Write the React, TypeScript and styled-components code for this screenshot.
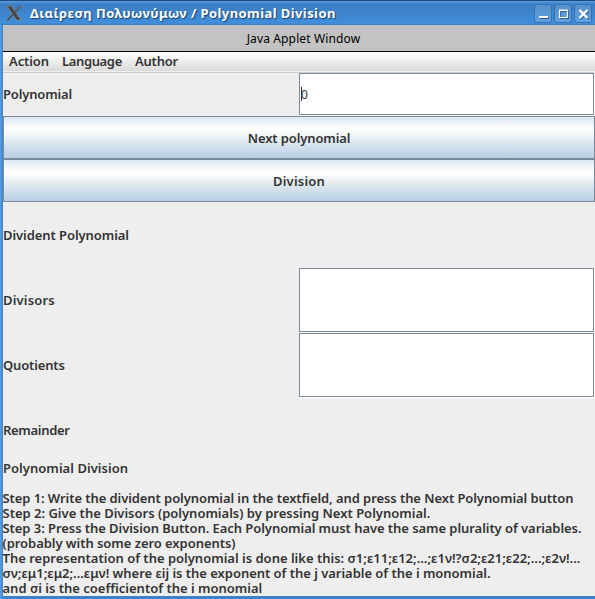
import React from 'react';
import styled, { createGlobalStyle } from 'styled-components';

const GlobalStyle = createGlobalStyle`
  * { box-sizing: border-box; }
  body { margin: 0; overflow: hidden; }
`;

const Window = styled.div`
  width: 595px;
  height: 599px;
  display: flex;
  flex-direction: column;
  background: #eeeeee;
  color: #333333;
  font: 600 13px/15px 'Noto Sans', sans-serif;
  white-space: pre;
`;

const TitleBar = styled.header`
  height: 25px;
  flex: none;
  display: flex;
  align-items: center;
  padding: 0 3px 0 6px;
  border-top: 1px solid #1f4878;
  background: linear-gradient(#5a9ce0 0, #3c80c6 3px, #3b80c6 7px, #428edb 22px, #3a7cc2 24px);
`;

const TitleText = styled.h1`
  flex: 1;
  margin: 0 0 0 8px;
  font: 700 13px/20px 'Noto Sans', sans-serif;
  letter-spacing: 0.42px;
  color: #ffffff;
  text-shadow: 1px 1px 1px #173f6e;
`;

const WindowButtons = styled.div`
  display: flex;
  gap: 2px;
  padding-top: 1px;
`;

const WindowButton = styled.button`
  width: 18px;
  height: 19px;
  padding: 0;
  border: 1px solid #3672b2;
  border-radius: 3px;
  background: linear-gradient(#5790cb, #629fe0);
  display: flex;
`;

const Body = styled.div`
  flex: 1;
  display: flex;
  flex-direction: column;
  border-left: 3px solid #3f86d0;
  border-bottom: 3px solid #3a82cc;
  border-image: linear-gradient(90deg, #5b9fe3 0, #3c82cb 3px, #3c82cb) 0 0 3 3;
`;

const AppletBanner = styled.div`
  height: 27px;
  flex: none;
  border-bottom: 1px solid #000000;
  background: #c3c3c3;
  color: #000000;
  text-align: center;
  font: 400 12px/28px 'Noto Sans', sans-serif;
  letter-spacing: 0.14px;
  padding-left: 9px;
`;

const MenuBar = styled.nav`
  height: 21px;
  flex: none;
  display: flex;
  gap: 13px;
  padding-left: 6px;
  border-bottom: 1px solid #cccccc;
  background: linear-gradient(#ffffff, #dadada 19px, #eeeeee 19px);
  line-height: 19px;
`;

const Spaced = styled.span<{ $ls?: number }>`
  letter-spacing: ${({ $ls = 0 }) => $ls}px;
`;

const Row = styled.div<{ $height: number }>`
  height: ${({ $height }) => $height}px;
  flex: none;
  display: grid;
  grid-template-columns: 296px 296px;
  align-items: center;
`;

const FieldFrame = styled.div`
  align-self: stretch;
  padding: 0 1px 1px 0;
  background: #ffffff;
  display: flex;
`;

const Field = styled.div`
  flex: 1;
  display: flex;
  align-items: center;
  border: 1px solid #7a8a99;
  padding-left: 1px;
  font-weight: 400;
  font-size: 12px;
`;

const Caret = styled.i`
  width: 1px;
  height: 14px;
  margin-right: -1px;
  background: #333333;
`;

const ActionButton = styled.button`
  height: 43px;
  flex: none;
  padding: 1px 0 0;
  border: 1px solid #7a8a99;
  background: linear-gradient(#dde8f3 0, #ffffff 30%, #ffffff 32%, #dbe6ef 64%, #b8cfe5 100%);
  color: inherit;
  font: inherit;
`;

const Heading = styled.div`
  height: 12px;
  flex: none;
  line-height: 11px;
  margin-bottom: 16px;
`;

const Instructions = styled.div`
  display: flex;
  flex-direction: column;
  margin-left: -0.5px;
`;

const XIcon = () => (
  <svg width="16" height="16" viewBox="0 0 16 16">
    <path d="M.5 .8h4.8l10 14.4h-4.7z" fill="#454545" stroke="#8b9095" strokeWidth=".8" />
    <path d="M14.5 .8L9 7M7 9L1.2 15.2" stroke="#4a4a4a" strokeWidth="2" />
    <path d="M15 .4L9.2 6.6M6.6 8.6L.8 14.8" stroke="#959a9f" strokeWidth=".7" />
  </svg>
);

const ControlIcon = ({ kind }: { kind: 'min' | 'max' | 'close' }) => {
  const shape =
    kind === 'min' ? 'M4 12h9' : kind === 'max' ? 'M4.5 5.5h8v7h-8zM4 5h9' : 'M4.5 5l8 8M12.5 5l-8 8';
  const width = kind === 'max' ? 1.2 : 2;
  return (
    <svg width="16" height="17" viewBox="0 0 16 17" fill="none">
      <path d={shape} stroke="#2b5f9b" strokeWidth={width} transform="translate(1 1)" />
      <path d={shape} stroke="#fff" strokeWidth={kind === 'close' ? 2.4 : width} />
    </svg>
  );
};

const menus: [string, number][] = [
  ['Action', -0.1],
  ['Language', -0.35],
  ['Author', -0.2],
];

const steps: [string, number][] = [
  ['Step 1: Write the divident polynomial in the textfield, and press the Next Polynomial button', -0.077],
  ['Step 2: Give the Divisors (polynomials) by pressing Next Polynomial.', -0.005],
  ['Step 3: Press the Division Button. Each Polynomial must have the same plurality of variables.', -0.06],
  ['(probably with some zero exponents)', -0.05],
  ['The representation of the polynomial is done like this: σ1;ε11;ε12;...;ε1ν!?σ2;ε21;ε22;...;ε2ν!...', 0],
  ['σν;εμ1;εμ2;...εμν! where εij is the exponent of the j variable of the i monomial.', -0.03],
  ['and σi is the coefficientof the i monomial', 0],
];

export default function App() {
  return (
    <Window>
      <GlobalStyle />
      <TitleBar>
        <XIcon />
        <TitleText>Διαίρεση Πολυωνύμων / Polynomial Division</TitleText>
        <WindowButtons>
          <WindowButton><ControlIcon kind="min" /></WindowButton>
          <WindowButton><ControlIcon kind="max" /></WindowButton>
          <WindowButton><ControlIcon kind="close" /></WindowButton>
        </WindowButtons>
      </TitleBar>
      <Body>
        <AppletBanner>Java Applet Window</AppletBanner>
        <MenuBar>
          {menus.map(([label, ls]) => <Spaced key={label} $ls={ls}>{label}</Spaced>)}
        </MenuBar>
        <Row $height={43}>
          <Spaced $ls={-0.16}>Polynomial</Spaced>
          <FieldFrame><Field><Caret />0</Field></FieldFrame>
        </Row>
        <ActionButton><Spaced $ls={-0.12}>Next polynomial</Spaced></ActionButton>
        <ActionButton><Spaced $ls={0.2}>Division</Spaced></ActionButton>
        <Row $height={66}><Spaced $ls={-0.07}>Divident Polynomial</Spaced></Row>
        <Row $height={65}>
          <Spaced $ls={0.18}>Divisors</Spaced>
          <FieldFrame><Field /></FieldFrame>
        </Row>
        <Row $height={65}>
          <Spaced $ls={-0.15}>Quotients</Spaced>
          <FieldFrame><Field /></FieldFrame>
        </Row>
        <Row $height={65}><Spaced $ls={-0.3}>Remainder</Spaced></Row>
        <Heading><Spaced $ls={0.04}>Polynomial Division</Spaced></Heading>
        <Instructions>
          {steps.map(([text, ls]) => <Spaced key={text} $ls={ls}>{text}</Spaced>)}
        </Instructions>
      </Body>
    </Window>
  );
}
